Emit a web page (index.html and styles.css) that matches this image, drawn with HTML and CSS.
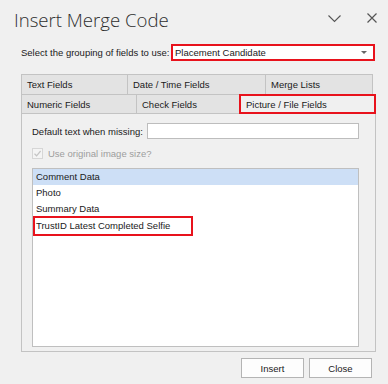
FILE: index.html
```html
<!DOCTYPE html>
<html lang="en">
<head>
  <meta charset="UTF-8">
  <title>Insert Merge Code</title>
  <link rel="stylesheet" href="styles.css">
</head>
<body>
  <div class="dialog">
    <div class="header">
      <div class="title">Insert Merge Code</div>
      <div class="win-btns">
        <svg class="chevron" width="13" height="8" viewBox="0 0 13 8">
          <path d="M0.5 0.5 L6.5 6.5 L12.5 0.5" fill="none" stroke="#555" stroke-width="1.1"/>
        </svg>
        <svg class="close-x" width="10" height="10" viewBox="0 0 10 10">
          <path d="M0.5 0.5 L9.5 9.5 M9.5 0.5 L0.5 9.5" fill="none" stroke="#555" stroke-width="1.2"/>
        </svg>
      </div>
    </div>

    <div class="group">
      <span class="label">Select the grouping of fields to use:</span>
      <div class="select marked">
        <span>Placement Candidate</span>
        <span class="arrow"></span>
      </div>
    </div>

    <div class="tabs">
      <div class="tab-row">
        <div class="tab w-text">Text Fields</div>
        <div class="tab w-date">Date / Time Fields</div>
        <div class="tab w-merge">Merge Lists</div>
      </div>
      <div class="tab-row second">
        <div class="tab w-numeric">Numeric Fields</div>
        <div class="tab w-check">Check Fields</div>
        <div class="tab w-picture active">Picture / File Fields</div>
      </div>
    </div>

    <div class="panel">
      <div class="field-row">
        <span class="label">Default text when missing:</span>
        <div class="textbox"></div>
      </div>
      <div class="check-row">
        <span class="checkbox">
          <svg width="9" height="9" viewBox="0 0 9 9">
            <path d="M1.5 4.8 L3.6 6.8 L7.6 2" fill="none" stroke="#c4c4c4" stroke-width="1.2"/>
          </svg>
        </span>
        <span class="disabled">Use original image size?</span>
      </div>
      <div class="listbox">
        <div class="item selected">Comment Data</div>
        <div class="item">Photo</div>
        <div class="item">Summary Data</div>
        <div class="item marked-item">TrustID Latest Completed Selfie</div>
      </div>
    </div>

    <div class="buttons">
      <button class="btn">Insert</button>
      <button class="btn">Close</button>
    </div>
  </div>
</body>
</html>
```

FILE: styles.css
```css
body {
  margin: 0;
  background: #f0f0f0;
  font-family: 'Liberation Sans', Arial, sans-serif;
  font-size: 9.5px;
  color: #1a1a1a;
}

.dialog {
  width: 388px;
  height: 384px;
  overflow: hidden;
}

/* title bar */
.header {
  display: flex;
  align-items: flex-start;
  height: 44px;
  padding: 0 11px 0 14px;
  box-sizing: border-box;
}

.title {
  margin-top: 6px;
  font-family: 'Open Sans', sans-serif;
  font-weight: 300;
  font-size: 18.6px;
  line-height: 27px;
  color: #2e2e2e;
}

.win-btns {
  margin-left: auto;
  display: flex;
  align-items: flex-start;
  gap: 26px;
}

.chevron {
  display: block;
  margin-top: 15px;
}

.close-x {
  display: block;
  margin-top: 13px;
}

/* grouping select */
.group {
  display: flex;
  align-items: center;
  height: 17px;
  padding: 0 13px 0 21px;
}

.select {
  margin-left: auto;
  width: 204px;
  height: 17px;
  box-sizing: border-box;
  background: #fff;
  display: flex;
  align-items: center;
  padding: 0 6px 0 2px;
}

.select .arrow {
  margin-left: auto;
  width: 0;
  height: 0;
  border-left: 3px solid transparent;
  border-right: 3px solid transparent;
  border-top: 3px solid #666;
}

.marked {
  border: 2px solid #e8121c;
}

/* tabs */
.tabs {
  margin: 13px 0 0 21px;
}

.tab-row {
  display: flex;
}

.tab-row.second {
  margin-top: -1px;
}

.tab {
  height: 21px;
  box-sizing: border-box;
  border: 1px solid #c3c3c3;
  border-right: none;
  background: #e3e3e3;
  padding-left: 5px;
  display: flex;
  align-items: center;
}

.tab:last-child {
  border-right: 1px solid #c3c3c3;
}

.tab-row.second .tab {
  height: 20px;
}

.w-text { width: 106px; }
.w-date { width: 138px; }
.w-merge { width: 108px; }
.w-numeric { width: 115px; }
.w-check { width: 103px; }
.w-picture { width: 137px; }

.tab.active {
  position: relative;
  z-index: 1;
  background: #f0f0f0;
  border: 2px solid #e8121c;
  padding-left: 5px;
}

/* panel */
.panel {
  margin: -1px 0 0 21px;
  width: 355px;
  height: 239px;
  box-sizing: border-box;
  border: 1px solid #c3c3c3;
  padding: 9px 16px 0 10px;
}

.field-row {
  display: flex;
  align-items: center;
  height: 16px;
}

.textbox {
  margin-left: auto;
  width: 212px;
  height: 16px;
  box-sizing: border-box;
  border: 1px solid #bdbdbd;
  background: #fff;
}

.check-row {
  display: flex;
  align-items: center;
  height: 11px;
  margin-top: 9px;
}

.checkbox {
  width: 11px;
  height: 11px;
  box-sizing: border-box;
  border: 1px solid #d6d6d6;
  background: #f4f4f4;
  display: flex;
  align-items: center;
  justify-content: center;
}

.checkbox svg {
  display: block;
}

.disabled {
  margin-left: 5px;
  color: #9d9d9d;
}

.listbox {
  margin-top: 9px;
  height: 179px;
  box-sizing: border-box;
  border: 1px solid #bfbfbf;
  background: #fff;
}

.item {
  height: 16px;
  line-height: 16px;
  padding-left: 3px;
}

.item.selected {
  background: #cddff6;
}

.item.marked-item {
  width: 160px;
  height: 20px;
  margin-top: -1px;
  box-sizing: border-box;
  border: 2px solid #e8121c;
  padding-left: 1px;
}

/* bottom buttons */
.buttons {
  display: flex;
  justify-content: flex-end;
  gap: 5px;
  margin-top: 6px;
  padding-right: 16px;
}

.btn {
  width: 63px;
  height: 20px;
  box-sizing: border-box;
  border: 1px solid #b4b4b4;
  background: #fdfdfd;
  font-family: 'Liberation Sans', Arial, sans-serif;
  font-size: 9.5px;
  color: #1a1a1a;
  padding: 0;
}
```
